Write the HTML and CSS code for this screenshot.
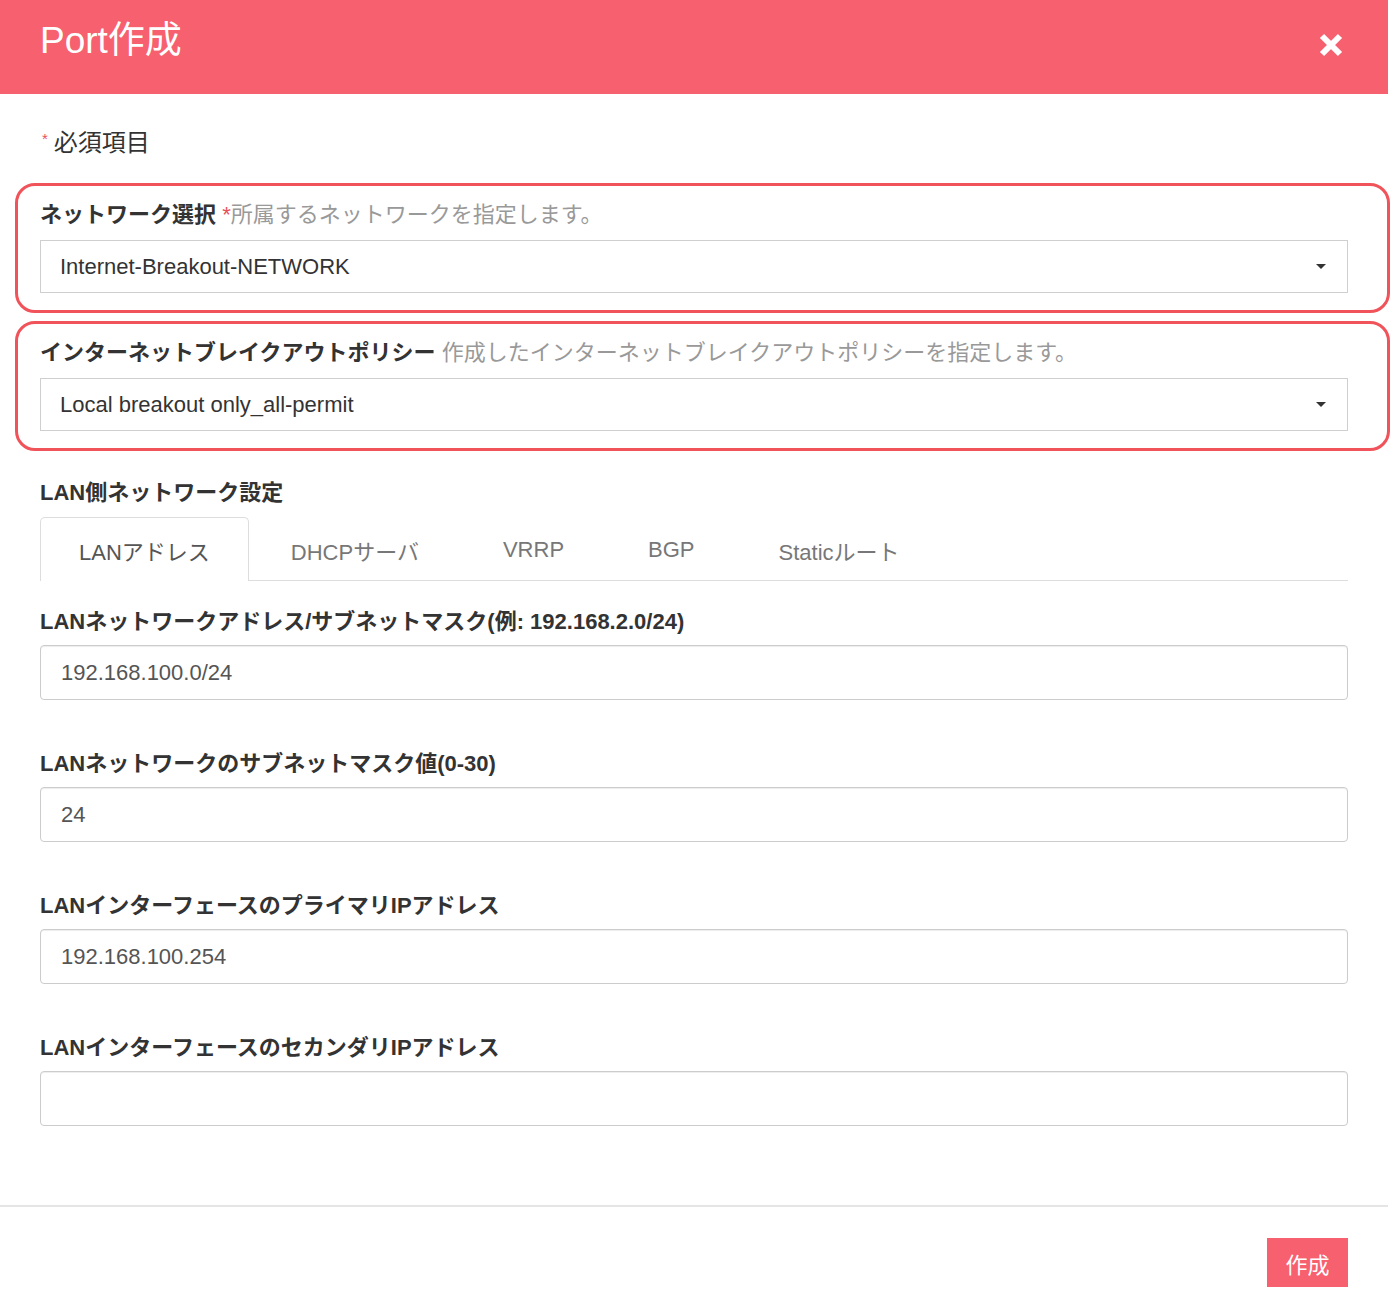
FILE: index.html
```html
<!DOCTYPE html>
<html lang="ja">
<head>
    <meta charset="UTF-8">
    <meta name="viewport" content="width=device-width, initial-scale=1.0">
    <title>Port作成</title>
    <link rel="stylesheet" href="styles.css">
</head>
<body>
    <div class="modal">
        <div class="modal-header">
            <h1 class="modal-title">Port作成</h1>
            <button class="close" type="button" aria-label="閉じる">
                <svg width="24" height="24" viewBox="0 0 24 24">
                    <path d="M3 3 L21 21 M21 3 L3 21" stroke="#fff" stroke-width="6" stroke-linecap="butt"/>
                </svg>
            </button>
        </div>

        <div class="modal-body">
            <p class="required-note"><span class="star">*</span>必須項目</p>

            <div class="highlight">
                <div class="label">ネットワーク選択 <span class="hint"><span class="star">*</span>所属するネットワークを指定します。</span></div>
                <div class="select">Internet-Breakout-NETWORK</div>
            </div>

            <div class="highlight second">
                <div class="label">インターネットブレイクアウトポリシー <span class="hint">作成したインターネットブレイクアウトポリシーを指定します。</span></div>
                <div class="select">Local breakout only_all-permit</div>
            </div>

            <div class="label section-title">LAN側ネットワーク設定</div>
            <ul class="tabs">
                <li class="tab active">LANアドレス</li>
                <li class="tab">DHCPサーバ</li>
                <li class="tab">VRRP</li>
                <li class="tab">BGP</li>
                <li class="tab">Staticルート</li>
            </ul>

            <div class="field first">
                <div class="label">LANネットワークアドレス/サブネットマスク(例: 192.168.2.0/24)</div>
                <div class="input">192.168.100.0/24</div>
            </div>
            <div class="field">
                <div class="label">LANネットワークのサブネットマスク値(0-30)</div>
                <div class="input">24</div>
            </div>
            <div class="field">
                <div class="label">LANインターフェースのプライマリIPアドレス</div>
                <div class="input">192.168.100.254</div>
            </div>
            <div class="field">
                <div class="label">LANインターフェースのセカンダリIPアドレス</div>
                <div class="input"></div>
            </div>
        </div>

        <div class="modal-footer">
            <button class="btn-create" type="button">作成</button>
        </div>
    </div>
</body>
</html>
```

FILE: styles.css
```css
body {
    margin: 0;
    padding: 0;
    background-color: #ffffff;
    font-family: "Liberation Sans", "Noto Sans CJK JP", sans-serif;
    color: #333333;
}
.modal {
    width: 1388px;
}
.modal-header {
    height: 94px;
    box-sizing: border-box;
    padding: 18px 45px 0 40px;
    background-color: #f7606e; /* pink header */
    display: flex;
    justify-content: space-between;
    align-items: flex-start;
}
.modal-title {
    margin: 0;
    color: #ffffff;
    font-size: 37px;
    font-weight: normal;
    line-height: 46px;
}
.close {
    margin-top: 15px;
    padding: 0;
    border: none;
    background: none;
    width: 24px;
    height: 24px;
    cursor: pointer;
}
.close svg {
    display: block;
}
.modal-body {
    padding: 34px 40px 79px 40px;
}
.required-note {
    margin: 0;
    font-size: 24px;
    line-height: 30px;
    color: #333333;
}
.required-note .star {
    font-size: 15px;
    vertical-align: top;
    line-height: 22px;
    margin: 0 6px 0 2px;
}
.star {
    color: #e8505a;
}
.highlight {
    margin: 25px -42px 0 -25px;
    padding: 16px 39px 17px 22px;
    border: 3px solid #f0545a; /* red outline */
    border-radius: 20px;
}
.highlight.second {
    margin-top: 8px;
}
.label {
    font-size: 22px;
    font-weight: bold;
    line-height: 26px;
    color: #333333;
    white-space: nowrap;
}
.hint {
    font-weight: normal;
    color: #999999;
}
.select {
    margin-top: 12px;
    height: 53px;
    box-sizing: border-box;
    border: 1px solid #cfcfcf;
    padding: 0 21px 0 19px;
    display: flex;
    align-items: center;
    justify-content: space-between;
    font-size: 22px;
    color: #333333;
}
.select::after {
    content: "";
    border-left: 5px solid transparent;
    border-right: 5px solid transparent;
    border-top: 5px solid #333333;
}
.section-title {
    margin-top: 29px;
}
.tabs {
    list-style: none;
    margin: 11px 0 0 0;
    padding: 0;
    display: flex;
    border-bottom: 1px solid #dddddd;
}
.tab {
    height: 64px;
    box-sizing: border-box;
    padding: 0 41px;
    display: flex;
    align-items: center;
    font-size: 22px;
    color: #777777;
    border: 1px solid transparent;
    border-bottom: none;
    margin-bottom: -1px;
}
.tab.active {
    padding: 0 38px;
    color: #555555;
    background-color: #ffffff;
    border-color: #dddddd;
    border-radius: 5px 5px 0 0;
}
.field {
    margin-top: 51px;
}
.field.first {
    margin-top: 28px;
}
.input {
    margin-top: 10px;
    height: 55px;
    box-sizing: border-box;
    border: 1px solid #cccccc;
    border-radius: 4px;
    box-shadow: inset 0 1px 1px rgba(0, 0, 0, 0.075);
    padding: 0 20px;
    display: flex;
    align-items: center;
    font-size: 22px;
    color: #555555;
}
.modal-footer {
    border-top: 2px solid #e5e5e5;
    padding: 31px 40px 20px 40px;
    display: flex;
    justify-content: flex-end;
}
.btn-create {
    width: 81px;
    height: 49px;
    border: none;
    border-radius: 0;
    background-color: #f7606e;
    color: #ffffff;
    font-family: "Liberation Sans", "Noto Sans CJK JP", sans-serif;
    font-size: 22px;
    cursor: pointer;
}
```
